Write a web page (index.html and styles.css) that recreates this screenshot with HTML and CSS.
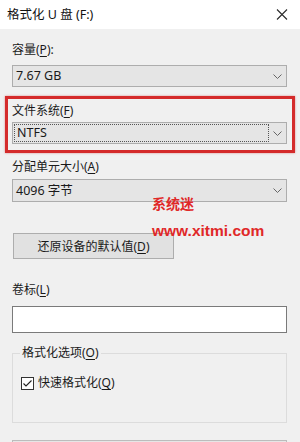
FILE: index.html
```html
<!DOCTYPE html>
<html lang="zh-CN">
<head>
    <meta charset="UTF-8">
    <meta name="viewport" content="width=device-width, initial-scale=1.0">
    <title>格式化 U 盘 (F:)</title>
    <link rel="stylesheet" href="styles.css">
</head>
<body>

    <div class="titlebar">
        <span class="title">格式化 U 盘 (F:)</span>
        <svg class="close" width="12" height="11" viewBox="0 0 12 11">
            <path d="M1 0.5 L11 10.5 M11 0.5 L1 10.5" stroke="#2b2b2b" stroke-width="1.1" fill="none"/>
        </svg>
    </div>

    <div class="content">
        <div class="label first">容量(<u>P</u>):</div>
        <div class="combo">
            <span>7.67 GB</span>
            <svg class="arrow" width="9" height="5" viewBox="0 0 9 5"><path d="M0.5 0.5 L4.5 4.5 L8.5 0.5" stroke="#666" fill="none"/></svg>
        </div>

        <!-- red annotation box around file system -->
        <div class="mark">
            <div class="label">文件系统(<u>F</u>)</div>
            <div class="combo focused">
                <span class="focus">NTFS</span>
                <svg class="arrow" width="9" height="5" viewBox="0 0 9 5"><path d="M0.5 0.5 L4.5 4.5 L8.5 0.5" stroke="#666" fill="none"/></svg>
            </div>
        </div>

        <div class="label third">分配单元大小(<u>A</u>)</div>
        <div class="combo">
            <span>4096 字节</span>
            <svg class="arrow" width="9" height="5" viewBox="0 0 9 5"><path d="M0.5 0.5 L4.5 4.5 L8.5 0.5" stroke="#666" fill="none"/></svg>
        </div>

        <button class="reset">还原设备的默认值(<u>D</u>)</button>

        <div class="label fourth">卷标(<u>L</u>)</div>
        <div class="textbox"></div>

        <fieldset class="group">
            <legend>格式化选项(<u>O</u>)</legend>
            <label class="check">
                <svg width="13" height="13" viewBox="0 0 13 13">
                    <rect x="0.5" y="0.5" width="12" height="12" fill="#fff" stroke="#333"/>
                    <path d="M2.5 6.5 L5 9 L10.5 3.5" stroke="#222" stroke-width="1.1" fill="none"/>
                </svg>
                <span>快速格式化(<u>Q</u>)</span>
            </label>
        </fieldset>

        <div class="progress"></div>
    </div>

    <div class="watermark">
        <div class="wm-name">系统迷</div>
        <div class="wm-url">www.xitmi.com</div>
    </div>

</body>
</html>
```

FILE: styles.css
```css
* {
    margin: 0;
    padding: 0;
    box-sizing: border-box;
}
html, body {
    width: 300px;
    height: 442px;
    overflow: hidden;
}
body {
    position: relative;
    background-color: #f0f0f0;
    font-family: "Noto Sans", "Noto Sans CJK SC", sans-serif;
    font-size: 12px;
    line-height: 16px;
    color: #1a1a1a;
}
u {
    text-decoration: underline;
    text-underline-offset: 2px;
}
.titlebar {
    height: 29px;
    background-color: #fff;
    display: flex;
    align-items: center;
    justify-content: space-between;
    padding: 0 12px 0 7px;
}
.title {
    font-size: 12.5px;
    color: #111;
}
.close {
    display: block;
    margin-top: -1px;
}
.content {
    padding: 0 13px 0 12px;
}
.label.first {
    margin-top: 13px;
}
.combo {
    height: 22px;
    margin-top: 7px;
    background-color: #e5e5e5;
    border: 1px solid #adadad;
    display: flex;
    align-items: center;
    justify-content: space-between;
    padding: 0 4px 0 3px;
}
.combo span {
    font-size: 12.5px;
}
.arrow {
    display: block;
}
/* dotted focus rectangle inside the combo */
.combo.focused {
    padding: 1px 4px 1px 1px;
    align-items: stretch;
}
.combo.focused .focus {
    flex: 0 0 255px;
    border: 1px dotted #555;
    padding-left: 2px;
    display: flex;
    align-items: center;
}
.combo.focused .arrow {
    align-self: center;
}
.mark {
    margin: 9px -8px 0 -7px;
    border: 3px solid #d42a2a;
    padding: 4px 5px 6px 4px;
    box-shadow: 0 0 2px rgba(200, 40, 40, 0.5);
}
.mark .combo {
    margin-top: 3px;
}
.label.third {
    margin-top: 6px;
}
.label.third + .combo {
    margin-top: 4px;
    height: 23px;
}
.reset {
    display: block;
    margin: 31px 0 0 1px;
    width: 161px;
    height: 26px;
    background-color: #e1e1e1;
    border: 1px solid #adadad;
    font-family: inherit;
    font-size: 12px;
    color: #1a1a1a;
}
.label.fourth {
    margin-top: 23px;
}
.textbox {
    margin-top: 8px;
    height: 27px;
    background-color: #fff;
    border: 1px solid #7a7a7a;
}
.group {
    margin-top: 12px;
    height: 78px;
    border: 1px solid #dcdcdc;
    padding: 0 8px;
}
.group legend {
    padding: 0 2px;
    margin-left: -1px;
}
.check {
    display: flex;
    align-items: center;
    gap: 4px;
    margin-top: 14px;
}
.check svg {
    display: block;
}
.progress {
    margin-top: 17px;
    height: 20px;
    background-color: #e6e6e6;
    border: 1px solid #bcbcbc;
}
.watermark {
    position: absolute;
    left: 152px;
    top: 195px;
    color: #e02828;
    font-weight: bold;
}
.wm-name {
    font-size: 14px;
    line-height: 18px;
}
.wm-url {
    margin-top: 8px;
    font-family: "Liberation Sans", Arial, sans-serif;
    font-size: 15.5px;
    line-height: 20px;
}
```
